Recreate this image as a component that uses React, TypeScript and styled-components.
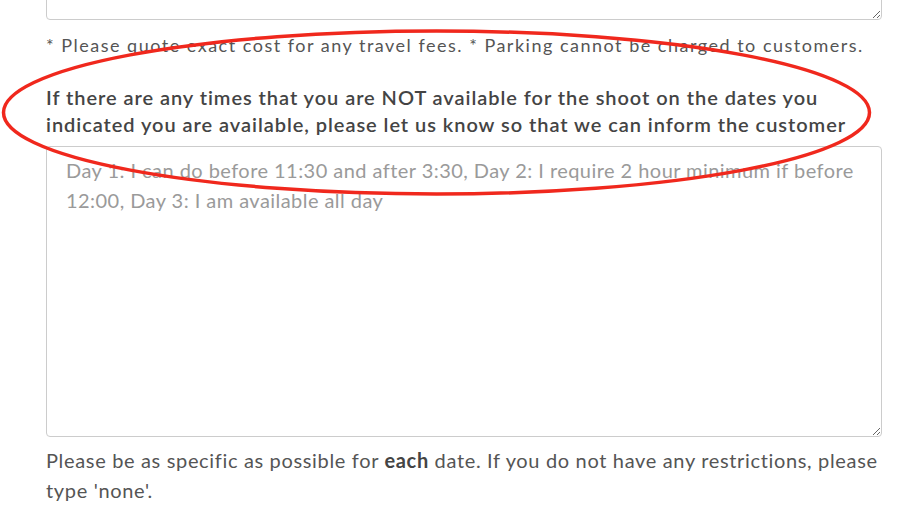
import React from "react";
import styled, { createGlobalStyle } from "styled-components";

const Global = createGlobalStyle`
  html, body { margin: 0; padding: 0; background: #ffffff; }
  body { font-family: "Lato", "Liberation Sans", sans-serif; overflow: hidden; }
`;

const Page = styled.div`
  position: relative;
  width: 907px;
  height: 511px;
  overflow: hidden;
`;

const Form = styled.div`
  display: flex;
  flex-direction: column;
  padding-left: 46px;
  width: 836px;
`;

const TextArea = styled.textarea<{ $height: number }>`
  box-sizing: border-box;
  display: block;
  width: 836px;
  height: ${(p) => p.$height}px;
  margin: 0;
  padding: 8px 19px;
  border: 1px solid #cccccc;
  border-radius: 4px;
  background: #ffffff;
  font-family: inherit;
  font-size: 20px;
  letter-spacing: 0.45px;
  line-height: 30px;
  color: #555555;
  outline: none;
  &::placeholder { color: #9a9a9a; }
`;

const TopArea = styled(TextArea)`
  margin-top: -40px;
`;

const Note = styled.p`
  margin: 10px 0 0;
  font-size: 18px;
  letter-spacing: 1.5px;
  line-height: 30px;
  color: #555555;
`;

const Label = styled.label`
  display: block;
  margin: 24px 0 8px;
  font-size: 20px;
  letter-spacing: 0.95px;
  line-height: 27px;
  font-weight: 600;
  color: #444444;
`;

const Help = styled.p`
  margin: 8px 0 0;
  font-size: 20px;
  letter-spacing: 0.66px;
  line-height: 30px;
  color: #555555;
  b { font-weight: 700; color: #444444; }
`;

const Highlight = styled.svg`
  position: absolute;
  left: 0;
  top: 0;
  pointer-events: none;
`;

export default function App() {
  return (
    <Page>
      <Global />
      <Form>
        <TopArea $height={60} />
        <Note>
          * Please quote exact cost for any travel fees. * Parking cannot be charged to customers.
        </Note>
        <Label htmlFor="avail">
          If there are any times that you are NOT available for the shoot on the dates you
          indicated you are available, please let us know so that we can inform the customer
        </Label>
        <TextArea
          id="avail"
          $height={291}
          placeholder="Day 1: I can do before 11:30 and after 3:30, Day 2: I require 2 hour minimum if before 12:00, Day 3: I am available all day"
        />
        <Help>
          Please be as specific as possible for <b>each</b> date. If you do not have any
          restrictions, please type 'none'.
        </Help>
      </Form>
      <Highlight width="907" height="511" viewBox="0 0 907 511">
        <ellipse
          cx="436.5"
          cy="112.5"
          rx="433"
          ry="81.5"
          fill="none"
          stroke="#f0281d"
          strokeWidth="3.5"
        />
      </Highlight>
    </Page>
  );
}
